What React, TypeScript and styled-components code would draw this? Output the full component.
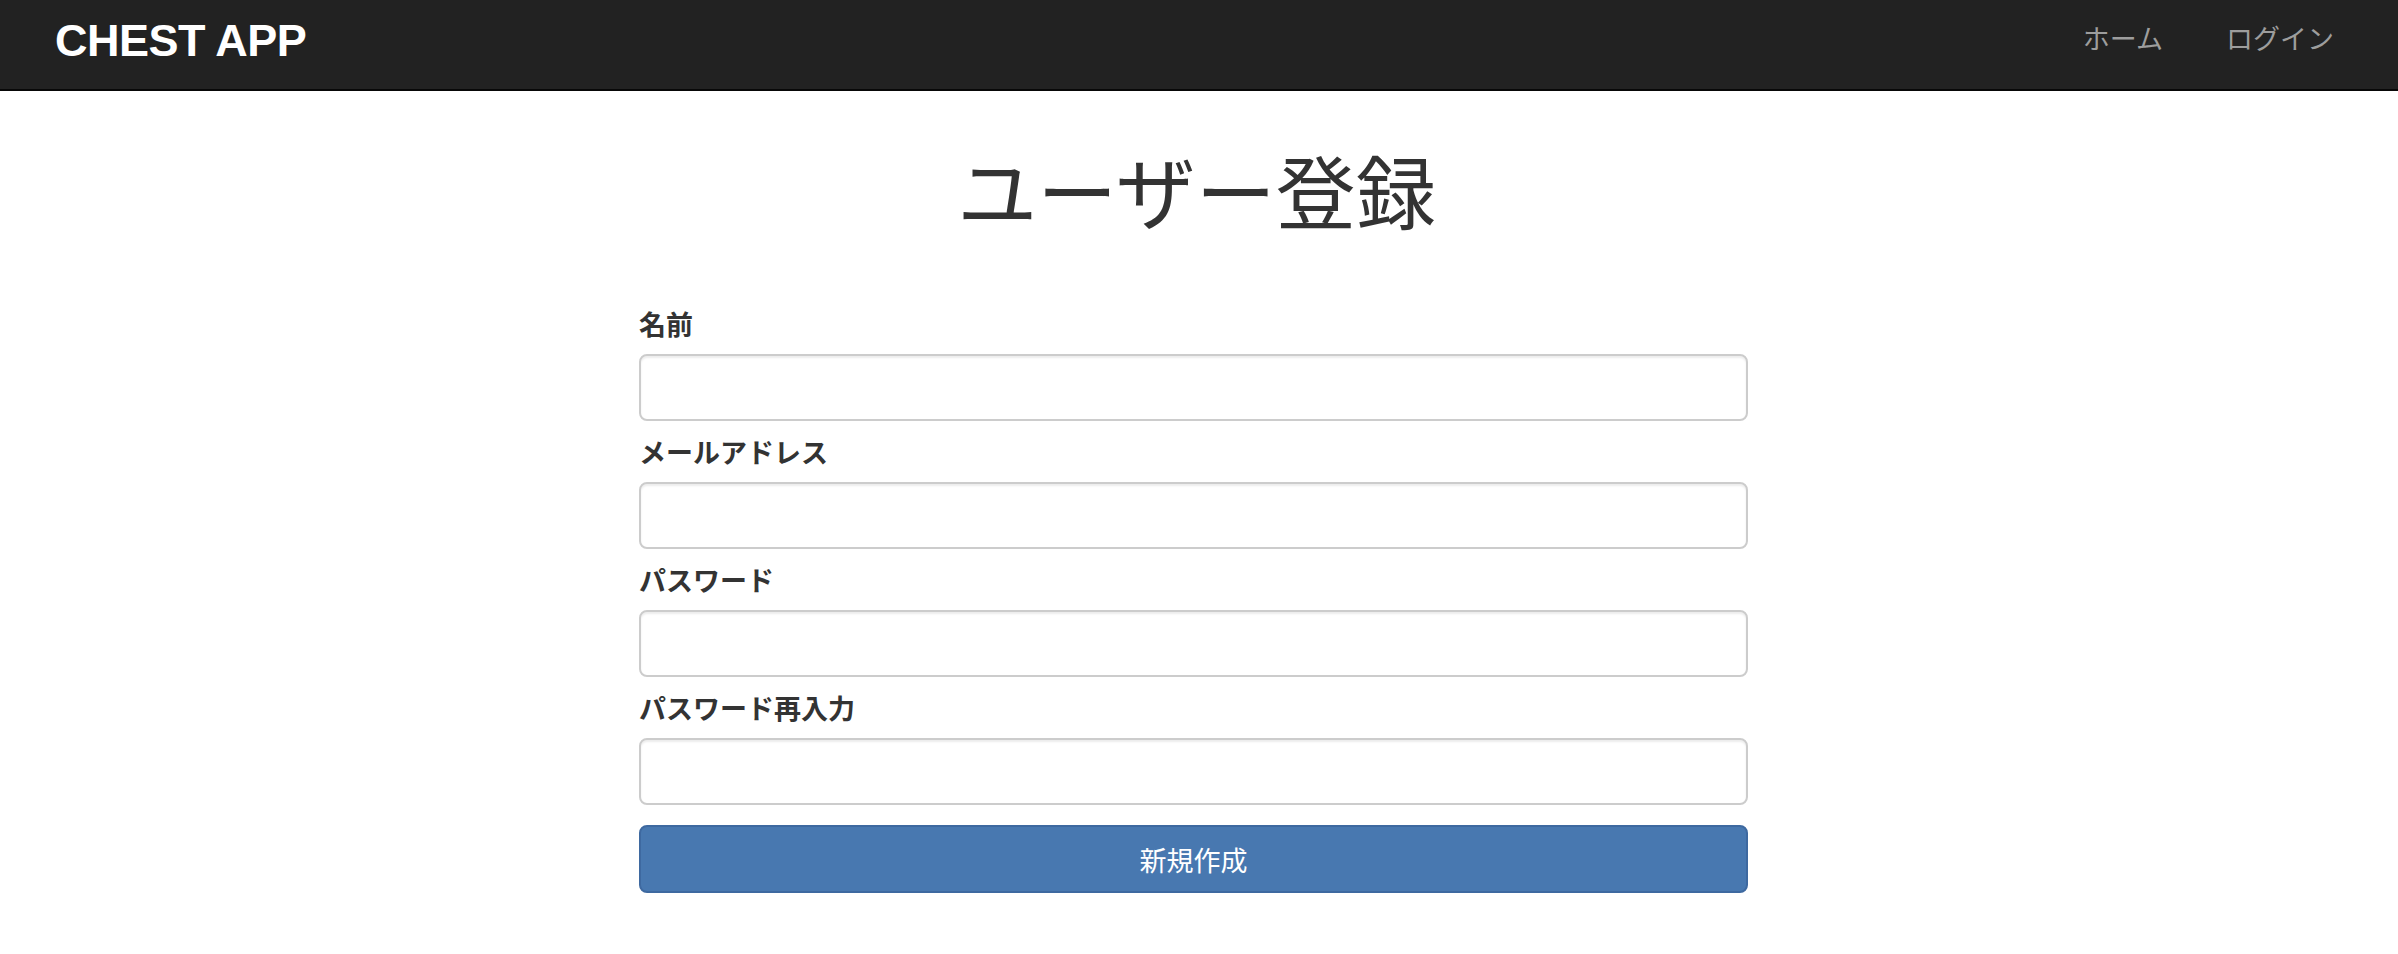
import styled, { createGlobalStyle } from "styled-components";

const GlobalStyle = createGlobalStyle`
  html, body {
    margin: 0;
    padding: 0;
    background: #ffffff;
  }

  body {
    font-family: "Liberation Sans", "Noto Sans CJK JP", sans-serif;
    color: #333333;
  }

  * {
    box-sizing: border-box;
  }
`;

//* ==> Data <== *//
const fields = [
  { id: "name", label: "名前", type: "text" },
  { id: "email", label: "メールアドレス", type: "email" },
  { id: "password", label: "パスワード", type: "password" },
  { id: "password_confirmation", label: "パスワード再入力", type: "password" },
];

const navLinks = ["ホーム", "ログイン"];

const App = () => {
  return (
    <>
      <GlobalStyle />
      <Navbar>
        <Brand>CHEST APP</Brand>
        <NavList>
          {navLinks.map((link) => (
            <NavItem key={link}>{link}</NavItem>
          ))}
        </NavList>
      </Navbar>
      <Main>
        <Title>ユーザー登録</Title>
        <Form onSubmit={(e) => e.preventDefault()}>
          {fields.map((field) => (
            <FormGroup key={field.id}>
              <Label htmlFor={field.id}>{field.label}</Label>
              <Input id={field.id} type={field.type} />
            </FormGroup>
          ))}
          <SubmitButton type="submit">新規作成</SubmitButton>
        </Form>
      </Main>
    </>
  );
};

const Navbar = styled.header`
  display: flex;
  align-items: center;
  justify-content: space-between;
  height: 91px;
  padding: 0 42px 0 55px;
  background-color: #222222;
  border-bottom: 2px solid #080808;
`;

const Brand = styled.span`
  font-family: "Liberation Sans", Arial, sans-serif;
  font-weight: bold;
  font-size: 45px;
  letter-spacing: -0.5px;
  color: #ffffff;
  margin-top: -8px;
`;

const NavList = styled.nav`
  display: flex;
  align-items: center;
  margin-top: -14px;
`;

const NavItem = styled.span`
  font-family: "Noto Sans CJK JP", sans-serif;
  font-size: 27px;
  color: #9d9d9d;
  padding: 0 22px 0 41px;
`;

const Main = styled.main`
  width: 1120px;
  margin: 0 auto;
  padding-right: 11px;
`;

const Title = styled.h1`
  font-family: "Noto Sans CJK JP", sans-serif;
  font-weight: normal;
  font-size: 80px;
  line-height: 86px;
  text-align: center;
  color: #333333;
  margin: 54px 0 74px;
  padding-left: 6px;
`;

const Form = styled.form`
  display: flex;
  flex-direction: column;
`;

const FormGroup = styled.div`
  display: flex;
  flex-direction: column;
  margin-bottom: 12px;
`;

const Label = styled.label`
  font-family: "Noto Sans CJK JP", sans-serif;
  font-weight: bold;
  font-size: 27px;
  line-height: 38px;
  color: #333333;
  margin-bottom: 11px;
`;

const Input = styled.input`
  height: 67px;
  width: 100%;
  padding: 10px 20px;
  font-size: 27px;
  border: 2px solid #cccccc;
  border-radius: 8px;
  background: #ffffff;
  box-shadow: inset 0 2px 2px rgba(0, 0, 0, 0.075);
  outline: none;
`;

const SubmitButton = styled.button`
  height: 68px;
  width: 100%;
  margin-top: 8px;
  font-family: "Noto Sans CJK JP", sans-serif;
  font-size: 27px;
  color: #ffffff;
  background-color: #4878b0;
  border: 2px solid #3e69a0;
  border-radius: 8px;
  cursor: pointer;
`;

export default App;
